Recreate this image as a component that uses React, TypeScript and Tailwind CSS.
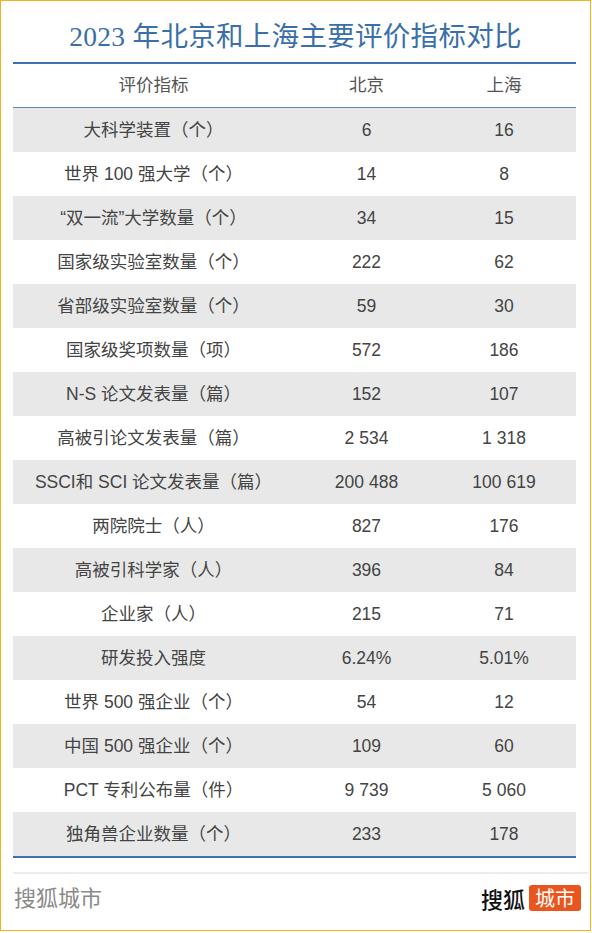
import React from "react";

const rows: [string, string, string][] = [
  ["大科学装置（个）", "6", "16"],
  ["世界 100 强大学（个）", "14", "8"],
  ["“双一流”大学数量（个）", "34", "15"],
  ["国家级实验室数量（个）", "222", "62"],
  ["省部级实验室数量（个）", "59", "30"],
  ["国家级奖项数量（项）", "572", "186"],
  ["N-S 论文发表量（篇）", "152", "107"],
  ["高被引论文发表量（篇）", "2 534", "1 318"],
  ["SSCI和 SCI 论文发表量（篇）", "200 488", "100 619"],
  ["两院院士（人）", "827", "176"],
  ["高被引科学家（人）", "396", "84"],
  ["企业家（人）", "215", "71"],
  ["研发投入强度", "6.24%", "5.01%"],
  ["世界 500 强企业（个）", "54", "12"],
  ["中国 500 强企业（个）", "109", "60"],
  ["PCT 专利公布量（件）", "9 739", "5 060"],
  ["独角兽企业数量（个）", "233", "178"],
];

const sans = "font-['Liberation_Sans','Noto_Sans_CJK_SC',sans-serif]";

export default function App() {
  return (
    <div className="w-[592px] h-[933px] bg-white">
      <div className="w-[591px] h-[931px] border-[1.5px] border-[#f3b21b] flex flex-col">
        <div className="h-[61px] flex items-center justify-center pt-[10px]">
          <h1 className="text-[27.5px] leading-none text-[#3a6fa9] font-['Liberation_Serif','Noto_Sans_CJK_SC',serif] tracking-[0.3px]">
            2023 年北京和上海主要评价指标对比
          </h1>
        </div>
        <div className={`mx-[11.5px] w-[563px] ${sans} text-[#444]`}>
          <div className="h-[2px] bg-[#3d72ae]" />
          <div className="h-[43px] flex items-center text-[17.5px] text-[#555]">
            <div className="w-[282px] text-center">评价指标</div>
            <div className="w-[144px] text-center">北京</div>
            <div className="flex-1 text-center pr-[6px]">上海</div>
          </div>
          <div className="h-[1px] bg-[#5a86ba]" />
          {rows.map((r, i) => (
            <div
              key={i}
              className={`h-[44px] flex items-center text-[17.5px] ${i % 2 === 0 ? "bg-[#e8e8e8]" : "bg-white"}`}
            >
              <div className="w-[282px] text-center whitespace-nowrap">{r[0]}</div>
              <div className="w-[144px] text-center">{r[1]}</div>
              <div className="flex-1 text-center pr-[6px]">{r[2]}</div>
            </div>
          ))}
          <div className="h-[2px] bg-[#3d72ae]" />
        </div>
        <div className="mt-[14px] mx-[11.5px] mr-[2px] h-[2px] bg-[#ececec]" />
        <div className="flex items-center justify-between pl-[13px] pr-[9px] h-[48px]">
          <span className={`text-[22px] text-[#8a8a8a] ${sans}`}>搜狐城市</span>
          <div className="flex items-center gap-[4px]">
            <span className="text-[22px] font-medium text-[#111] font-['Noto_Sans_CJK_SC',sans-serif] leading-none">搜狐</span>
            <span className="bg-[#e8561e] rounded-[3px] text-white text-[20px] leading-none px-[6px] py-[3px] font-['Noto_Sans_CJK_SC',sans-serif]">
              城市
            </span>
          </div>
        </div>
      </div>
    </div>
  );
}
